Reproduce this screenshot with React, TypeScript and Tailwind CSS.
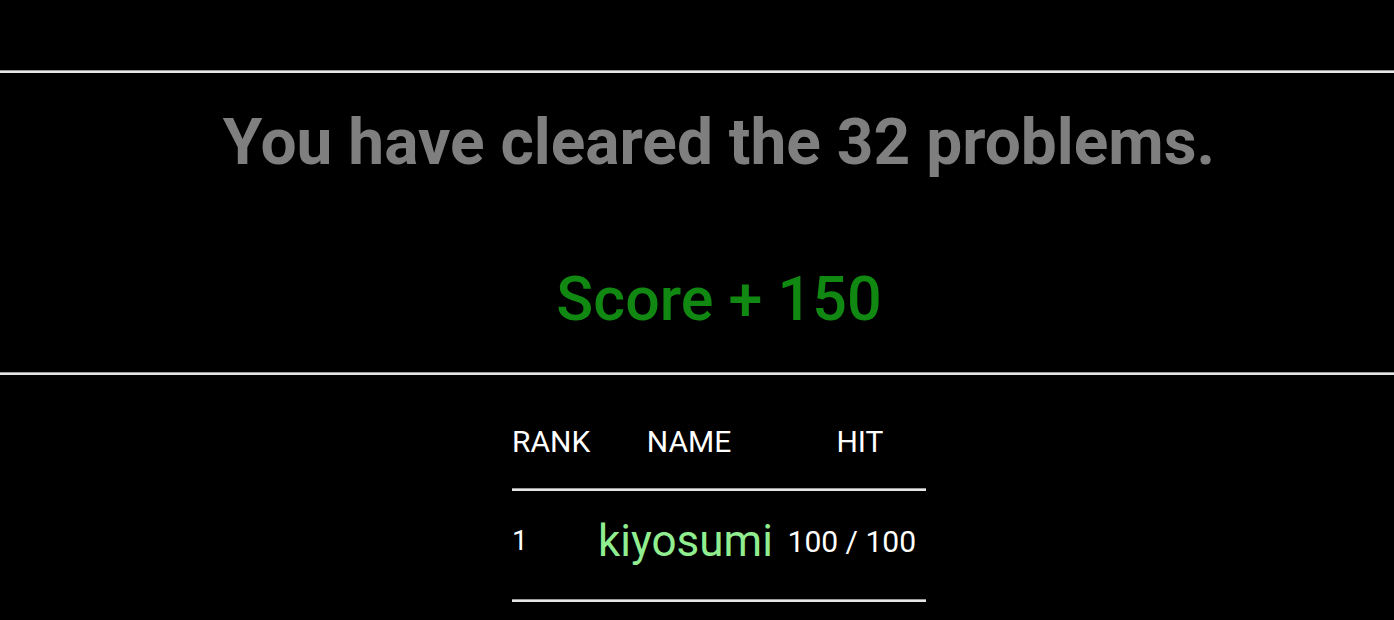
const font = { fontFamily: 'Roboto, "Noto Sans", sans-serif' };

function Rule({ className = '' }: { className?: string }) {
  return (
    <div className={className}>
      <div className="h-px bg-[#9a9a9a]"></div>
      <div className="h-[2px] bg-[#e6e6e6]"></div>
    </div>
  );
}

export default function App() {
  return (
    <div className="min-h-[620px] bg-black overflow-hidden" style={font}>
      <div className="pt-[70px] pl-[44px]">
        <Rule className="-ml-[44px]" />
        <div className="h-[299px] flex flex-col items-center">
          <h1 className="mt-[30px] text-[64px] leading-[80px] font-bold text-[#7f7f7f]">
            You have cleared the 32 problems.
          </h1>
          <h2 className="mt-[76px] text-[61px] leading-[80px] font-medium text-[#118811]">
            Score + 150
          </h2>
        </div>
        <Rule className="-ml-[44px]" />

        <div className="flex justify-center mt-[45px]">
          <div className="w-[414px] text-white">
            <div className="flex h-[42px] items-center text-[30px]">
              <div className="w-[86px]">RANK</div>
              <div className="w-[182px] text-center">NAME</div>
              <div className="w-[146px] text-center pl-[14px]">HIT</div>
            </div>
            <Rule className="mt-[26px]" />
            <div className="flex h-[108px] items-center pb-[8px]">
              <div className="w-[86px] text-[28px]">1</div>
              <div className="w-[188px] text-left text-[44px] text-[#90ee90] whitespace-nowrap">kiyosumi</div>
              <div className="w-[140px] text-right text-[30px] pr-[10px]">100 / 100</div>
            </div>
            <Rule />
          </div>
        </div>
      </div>
    </div>
  );
}
